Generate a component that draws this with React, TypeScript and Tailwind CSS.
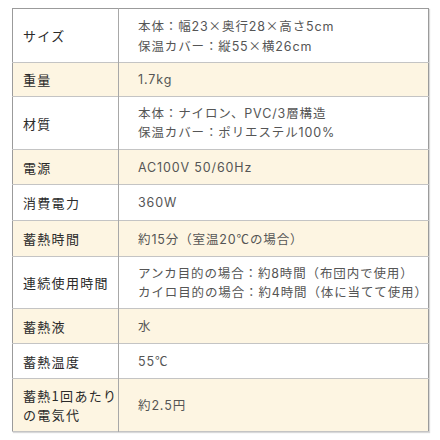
const specs = [
  { label: ["サイズ"], value: ["本体：幅23×奥行28×高さ5cm", "保温カバー：縦55×横26cm"], h: "h-[54px]", shade: false },
  { label: ["重量"], value: ["1.7kg"], h: "h-[34px]", shade: true },
  { label: ["材質"], value: ["本体：ナイロン、PVC/3層構造", "保温カバー：ポリエステル100%"], h: "h-[53px]", shade: false },
  { label: ["電源"], value: ["AC100V 50/60Hz"], h: "h-[35px]", shade: true },
  { label: ["消費電力"], value: ["360W"], h: "h-[36px]", shade: false },
  { label: ["蓄熱時間"], value: ["約15分（室温20℃の場合）"], h: "h-[36px]", shade: true },
  { label: ["連続使用時間"], value: ["アンカ目的の場合：約8時間（布団内で使用）", "カイロ目的の場合：約4時間（体に当てて使用）"], h: "h-[52px]", shade: false },
  { label: ["蓄熱液"], value: ["水"], h: "h-[35px]", shade: true },
  { label: ["蓄熱温度"], value: ["55℃"], h: "h-[35px]", shade: false },
  { label: ["蓄熱1回あたり", "の電気代"], value: ["約2.5円"], h: "h-[53px]", shade: true },
];

// × and ℃ look right only in the CJK face
function ValueLine({ text }: { text: string }) {
  const parts = text.split(/([×℃])/);
  return (
    <div>
      {parts.map((p, i) =>
        p === "×" || p === "℃" ? (
          <span key={i} className="font-['Noto_Sans_CJK_JP',sans-serif]">
            {p}
          </span>
        ) : (
          <span key={i}>{p}</span>
        )
      )}
    </div>
  );
}

export default function App() {
  return (
    <div
      className="h-[440px] w-[440px] bg-white pl-[12px] pt-[8px]"
      style={{ fontFamily: '"Noto Sans CJK JP", "Noto Sans", sans-serif' }}
    >
      <table className="w-[417px] border-collapse border border-[#9b9b9b] shadow-[1px_1px_1px_rgba(0,0,0,0.15)]">
        <tbody>
          {specs.map((row) => (
            <tr
              key={row.label.join("")}
              className={`${row.h} border-b border-[#c4c4c4] ${row.shade ? "bg-[#fdf5e2]" : "bg-white"}`}
            >
              <td className="w-[106px] border-r border-[#a8a8a8] pl-[10px] align-middle text-[13px] leading-[19px] font-normal tracking-[0.1em] text-[#2a2a2a]">
                {row.label.map((l) => (
                  <div key={l}>{l}</div>
                ))}
              </td>
              <td className="whitespace-nowrap pl-[19px] align-middle font-['Inter','Noto_Sans_CJK_JP',sans-serif] text-[12.5px] leading-[19px] tracking-[0.07em] text-[#555]">
                {row.value.map((v) => (
                  <ValueLine key={v} text={v} />
                ))}
              </td>
            </tr>
          ))}
        </tbody>
      </table>
    </div>
  );
}
